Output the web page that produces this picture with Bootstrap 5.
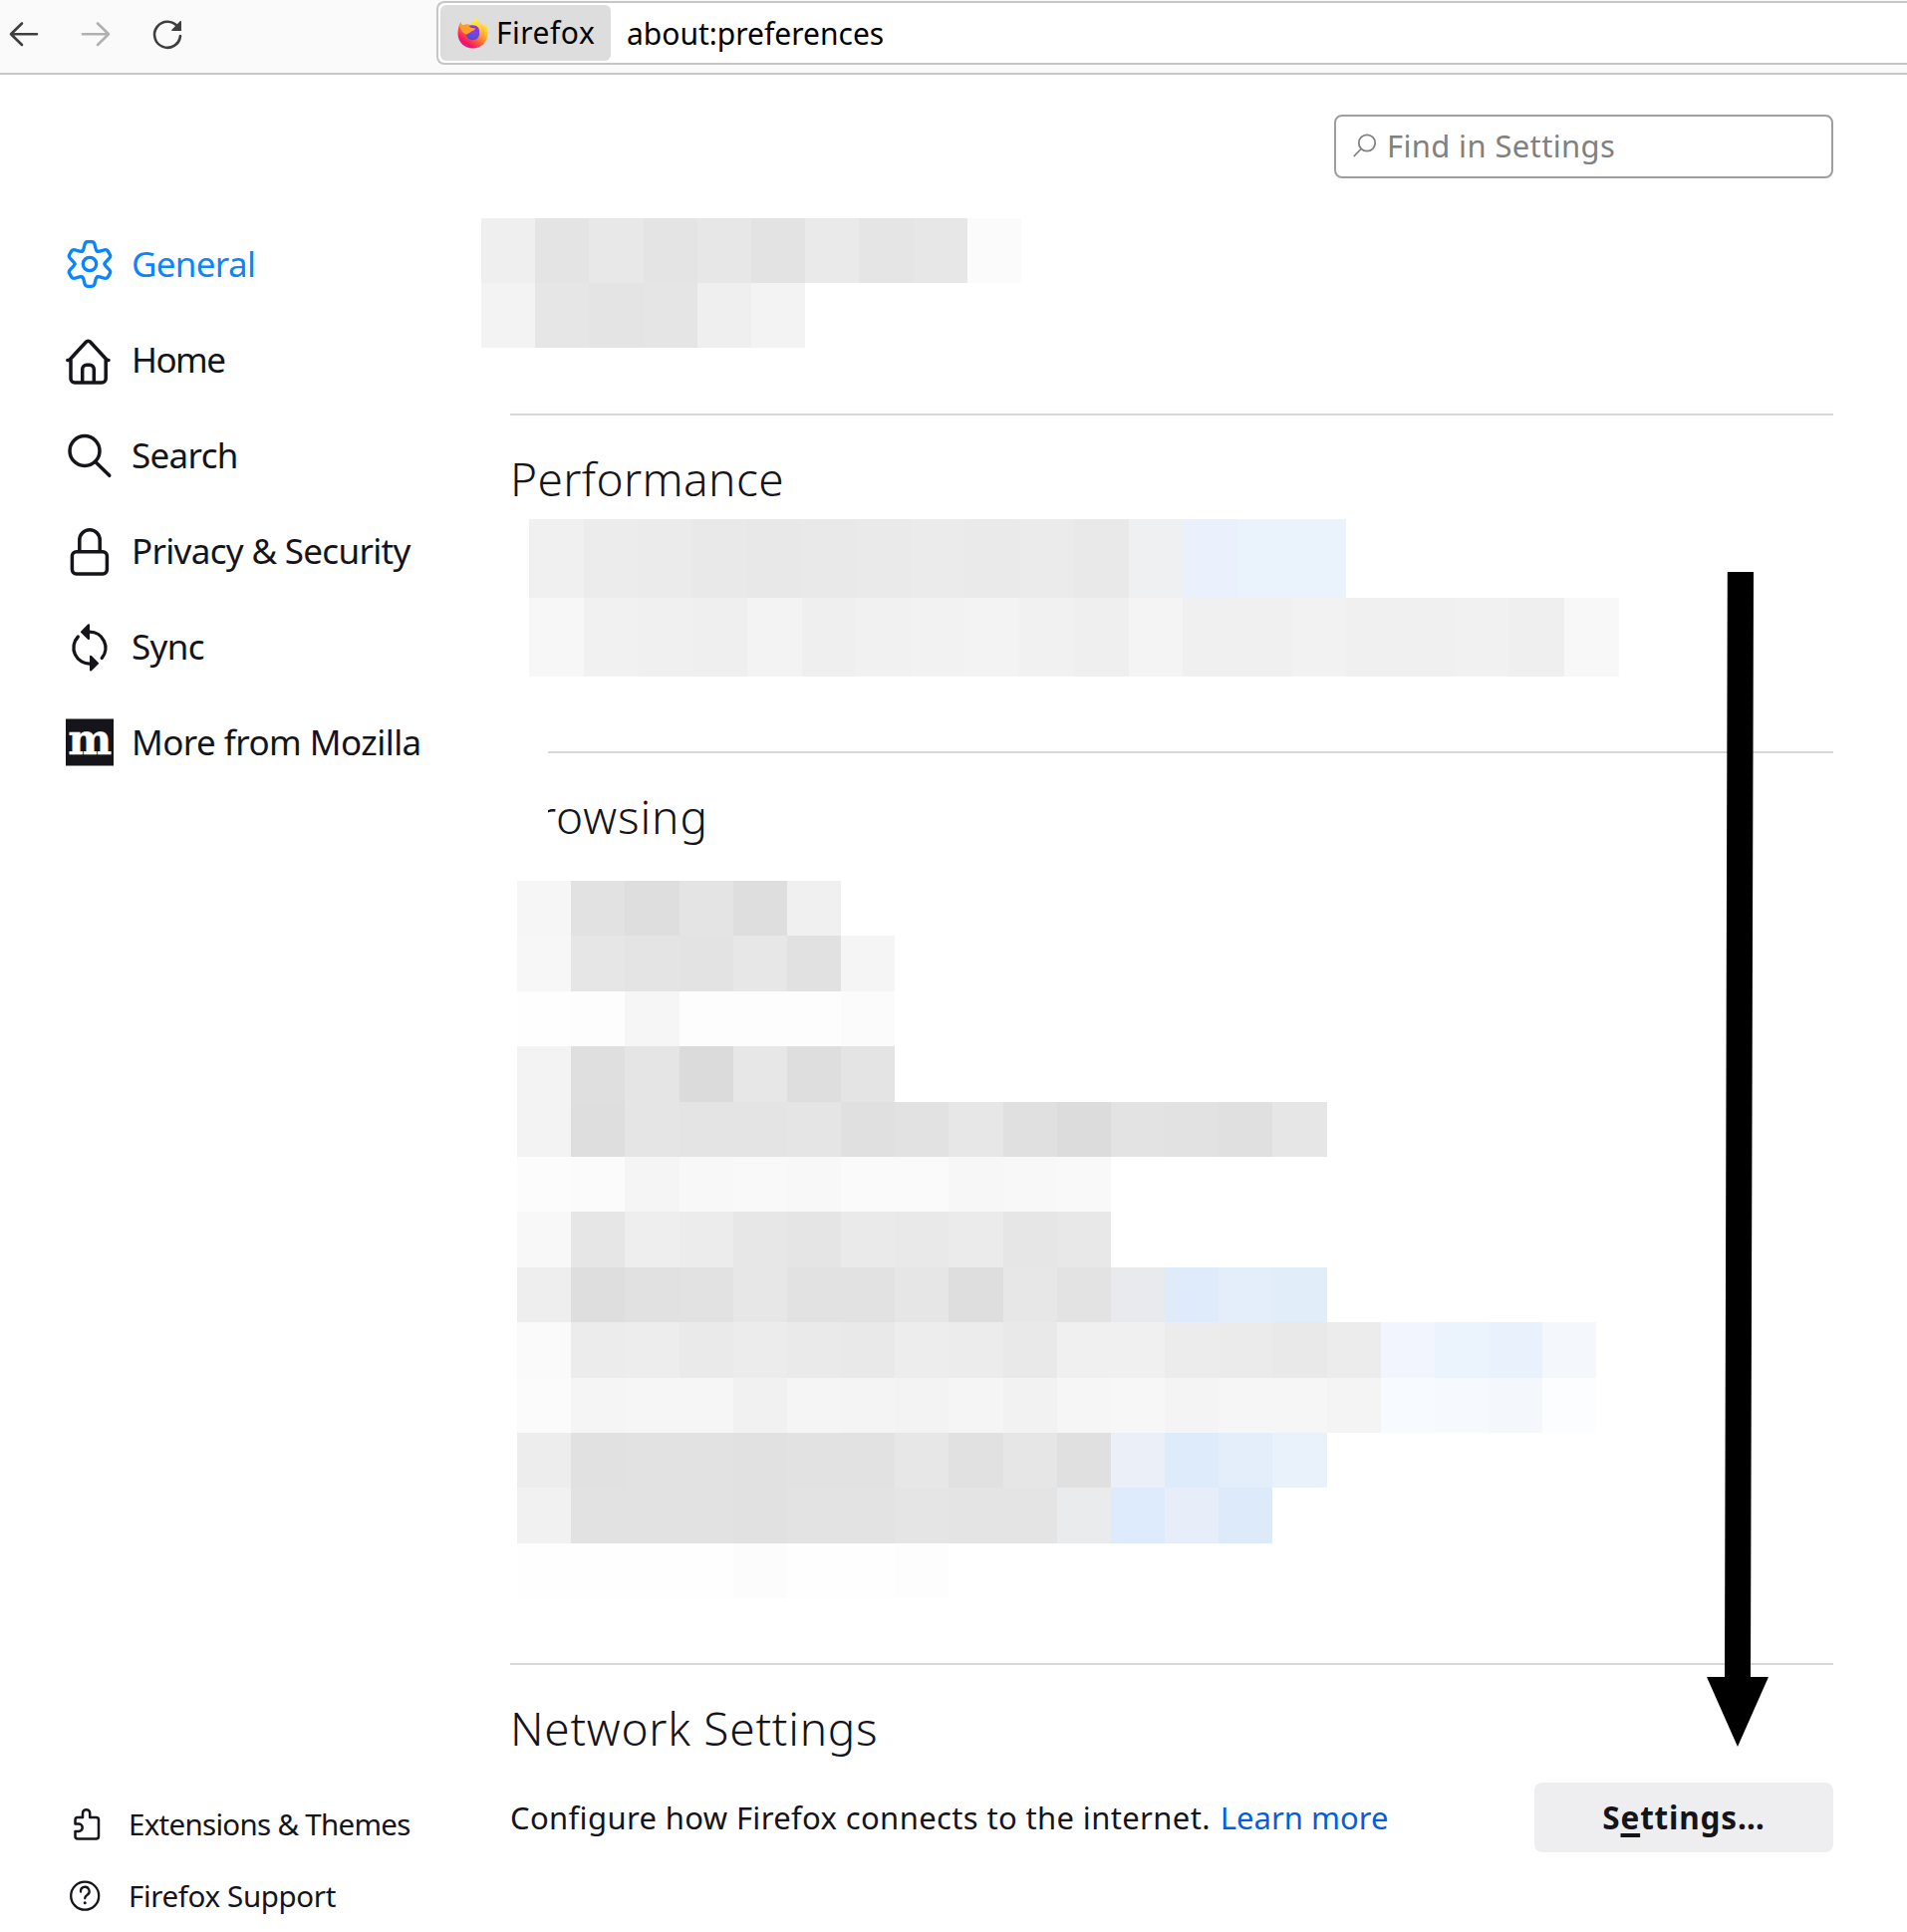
<!DOCTYPE html>
<html lang="en">
<head>
<meta charset="utf-8">
<title>Settings</title>
<link href="https://cdn.jsdelivr.net/npm/bootstrap@5.3.0/dist/css/bootstrap.min.css" rel="stylesheet">
<style>
  html, body { height: 1939px; overflow: hidden; }
  body { font-family: "Noto Sans", sans-serif; color: #15141a; background: #fff; }
  svg { display: block; flex: none; overflow: visible; }
  .toolbar { height: 75px; background: #fafafa; border-bottom: 2px solid #c6c6c6; color: #3e3e3e; }
  .tool-icons { width: 438px; }
  .urlbar { height: 64px; margin-top: 1px; background: #fff; border: 2px solid #c6c6c6; border-right: 0; border-radius: 8px 0 0 8px; padding: 2px; font-size: 30px; line-height: 58px; color: #000; }
  .identity { width: 171px; height: 56px; background: #ddd; border-radius: 6px; padding-left: 17px; }
  .identity span { margin-left: 8px; letter-spacing: .5px; }
  .address { margin-left: 16px; }
  .shell { height: 1864px; }
  .sidebar { width: 512px; padding: 142px 0 0 66px; }
  .side-item { height: 96px; font-size: 35px; line-height: 96px; color: inherit; padding: 0; white-space: nowrap; }
  .side-item span { margin-left: 18px; letter-spacing: -.68px; }
  .side-item .tight { letter-spacing: -1.5px; }
  .side-item .easy { letter-spacing: -.55px; }
  .side-item.active { color: #0a84ff; }
  .side-foot .side-item { height: 72px; font-size: 29.5px; line-height: 72px; }
  .side-foot .side-item span { margin-left: 27px; letter-spacing: -.7px; }
  .side-foot .side-item .loose { letter-spacing: -.35px; }
  .prefs { width: 1328px; padding-top: 40px; }
  .find { width: 501px; height: 64px; border: 2px solid #9e9e9e; border-radius: 8px; color: #808080; font-size: 31px; line-height: 58px; padding: 0 0 2px 17px; background: #fff; }
  .find span { margin-left: 10px; letter-spacing: .35px; }
  .rule { height: 2px; background: #d7d7db; }
  .rule.short { margin-left: 38px; }
  .heading { font-size: 46px; font-weight: 300; line-height: 60px; height: 60px; margin: 33px 0 0; letter-spacing: .4px; white-space: nowrap; }
  .heading.wide { letter-spacing: .75px; }
  .heading.clipped { margin-left: 38px; overflow: hidden; text-indent: -10px; letter-spacing: .9px; }
  .mosaic { display: grid; }
  .m-top { grid-template: repeat(2, 65px) / repeat(10, 54.2px); margin: 40px 0 66px -29px; }
  .m-perf { grid-template: repeat(2, 79px) / repeat(20, 54.68px); margin: 11px 0 75px 19.4px; }
  .m-browse { grid-template: repeat(13, 55.42px) / repeat(20, 54.18px); margin: 35px 0 64.5px 7px; }
  .net-row { margin-top: 25px; font-size: 31px; line-height: 70px; white-space: nowrap; }
  .net-row .desc { letter-spacing: .36px; }
  .net-row a { color: #0060df; margin-left: 10px; letter-spacing: 0; }
  .btn-settings { width: 300px; height: 70px; background: #eeeef0; border-radius: 8px; font-size: 31.5px; font-weight: 700; line-height: 70px; padding: 0; border: 0; letter-spacing: .8px; color: #15141a; }
  .btn-settings u { text-decoration-thickness: 4px; text-underline-offset: 4px; text-decoration-skip-ink: none; }
  .pointer { position: absolute; left: 1713px; top: 574px; }
</style>
<script src="https://cdn.jsdelivr.net/npm/bootstrap@5.3.0/dist/js/bootstrap.bundle.min.js"></script>
</head>
<body class="position-relative">
<header class="toolbar d-flex align-items-start">
  <div class="tool-icons">
    <svg width="200" height="70" fill="none" stroke="currentColor" stroke-width="2.6" stroke-linecap="round" stroke-linejoin="round">
      <path d="M37 34.3H11M22 23.5L11 34.3 22 45"/>
      <path stroke="#b0b0b0" d="M83 34.3h26M98 23.5l11 10.8L98 45"/>
      <path d="M178.5 27A13 13 0 1 0 181 36"/>
      <path fill="currentColor" stroke="none" d="M182 21.6V31h-9c-.8 0-1-.8-.5-1.3l8.200-8.500c.5-.5 1.300-.2 1.300.4z"/>
    </svg>
  </div>
  <div class="urlbar d-flex flex-grow-1">
    <div class="identity d-flex align-items-center">
      <svg width="31" height="32" viewBox="0 0 31 32">
        <defs>
          <linearGradient id="fxBody" x1=".85" y1=".1" x2=".2" y2=".95"><stop offset="0" stop-color="#fff044"/><stop offset=".35" stop-color="#ffb02e"/><stop offset=".62" stop-color="#ff5a36"/><stop offset=".85" stop-color="#f5156c"/><stop offset="1" stop-color="#e31587"/></linearGradient>
          <radialGradient id="fxGlobe" cx=".6" cy=".2" r=".9"><stop offset="0" stop-color="#a238f0"/><stop offset=".6" stop-color="#6548de"/><stop offset="1" stop-color="#4a4bc4"/></radialGradient>
          <linearGradient id="fxHead" x1="0" y1="0" x2="1" y2="1"><stop offset="0" stop-color="#ff9a1f"/><stop offset="1" stop-color="#ffa52e"/></linearGradient>
          <linearGradient id="fxFlame" x1=".3" y1="0" x2=".5" y2="1"><stop offset="0" stop-color="#fff251"/><stop offset=".5" stop-color="#ffcf3a"/><stop offset="1" stop-color="#ff8a2b"/></linearGradient>
        </defs>
        <path fill="url(#fxBody)" d="M3.500 5c0 2 1 3 2.500 3.200C9 6.500 12 7 14 8.500 15 4.500 17.500 3 19.500.8c.5 3.200 3 4.700 5 6.700 1 .2 2 .8 2.500 1.500.5-.8.5-1.600.3-2.400C30 9.500 31 13 30.500 17.500 29.800 26 23.500 31.500 15.500 31.500 7 31.500.5 25 .5 16.500.5 12 1.500 8 3.500 5z"/>
        <circle cx="15.500" cy="16.500" r="6.800" fill="url(#fxGlobe)"/>
        <path fill="url(#fxFlame)" d="M19.500.8c.5 3.200 3 4.700 5 7.200 3.500 4.500 3.800 11-.5 15.500 1-5-.5-9-4-11.500-2.500-1.500-4.500-2.500-6-3.500C15 4.500 17.500 3 19.500.8z"/>
        <path fill="#8a35e6" d="M11.500 9c3-1.500 7-1 9.300 1.500 1.500 1.800 1.700 4 1 6L15 13z"/>
        <path fill="url(#fxHead)" d="M3.500 5c0 2 1 3 2.500 3.200 2-.6 4-.3 5.500.8 1.500 2 4 2.300 6.700 2.500-.5 2-2.500 2.400-4 2.800-1 1.700-3 2-4.500 3.200C7 17 3 14 2.500 8.500z"/>
      </svg>
      <span>Firefox</span>
    </div>
    <div class="address">about:preferences</div>
  </div>
</header>

<div class="shell d-flex">
  <nav class="sidebar nav flex-column flex-nowrap">
    <a class="side-item active d-flex align-items-center text-decoration-none">
      <svg width="48" height="48" viewBox="-24 -24 48 48" fill="none" stroke="currentColor" stroke-width="3.300" stroke-linecap="round">
        <path id="tooth" d="M-7.500-13C-6-13.800-5.900-16-5.400-18.200-4.800-21.500-4-22.300-2.200-22.300H2.200C4-22.300 4.800-21.500 5.400-18.200 5.900-16 6-13.800 7.500-13"/>
        <use href="#tooth" transform="rotate(60)"/><use href="#tooth" transform="rotate(120)"/><use href="#tooth" transform="rotate(180)"/><use href="#tooth" transform="rotate(240)"/><use href="#tooth" transform="rotate(300)"/>
        <circle r="6.700"/>
      </svg>
      <span>General</span></a>
    <a class="side-item d-flex align-items-center text-decoration-none">
      <svg width="48" height="48" fill="none" stroke="currentColor" stroke-width="3.500" stroke-linecap="round" stroke-linejoin="round">
        <path d="M1.800 24.500H3.500L20.300 6.300a3 3 0 0 1 4.400 0L41.500 24.500H43M5 24v19a4 4 0 0 0 4 4H36.200a4 4 0 0 0 4-4V24M16.700 47V33.500a4.300 4.300 0 0 1 4.300-4.300h3a4.300 4.300 0 0 1 4.300 4.300V47"/>
      </svg>
      <span class="tight">Home</span></a>
    <a class="side-item d-flex align-items-center text-decoration-none">
      <svg width="48" height="48" fill="none" stroke="currentColor" stroke-width="3.500" stroke-linecap="round"><circle cx="19" cy="19.500" r="15"/><path d="M30 30.700L43.800 44.300"/></svg>
      <span>Search</span></a>
    <a class="side-item d-flex align-items-center text-decoration-none">
      <svg width="48" height="48" fill="none" stroke="currentColor" stroke-width="3.500"><rect x="6.400" y="24.700" width="35" height="22.200" rx="4.300"/><path d="M13.800 24.700V13A10.200 10.200 0 0 1 34.200 13V24.700"/></svg>
      <span>Privacy &amp; Security</span></a>
    <a class="side-item d-flex align-items-center text-decoration-none">
      <svg width="48" height="48" fill="none" stroke="currentColor" stroke-width="3.300" stroke-linecap="round"><path d="M12.300 14A16 16 0 0 0 25 41M24 9.200A16 16 0 0 1 36.200 35.500"/><path fill="currentColor" stroke-width="1.200" stroke-linejoin="round" d="M15.500 9.200L22.600 2q.8-.6.800.4V15.800q0 1-.8.4zM32.500 40.700L25.400 33.500q-.8-.6-.8.400V47.300q0 1 .8.400z"/></svg>
      <span>Sync</span></a>
    <a class="side-item d-flex align-items-center text-decoration-none">
      <svg width="48" height="48"><rect y=".5" width="48" height="47" fill="#15141a"/><text x="2.500" y="36" font-family="DejaVu Serif, serif" font-weight="700" font-size="43" textLength="43.500" lengthAdjust="spacingAndGlyphs" fill="#fff" stroke="#fff" stroke-width=".7">m</text></svg>
      <span class="easy">More from Mozilla</span></a>

    <div class="side-foot mt-auto">
      <a class="side-item d-flex align-items-center text-decoration-none">
        <svg width="36" height="36" fill="none" stroke="currentColor" stroke-width="2.500" stroke-linejoin="round"><path d="M9.500 17.600V13.500a2.500 2.500 0 0 1 2.500-2.500H17V6.800a3.600 3.600 0 0 1 7.200 0V11H30.500a2.500 2.500 0 0 1 2.500 2.500V30a2.500 2.500 0 0 1-2.500 2.500H12a2.500 2.500 0 0 1-2.500-2.500V25H13a3.700 3.700 0 0 0 0-7.400z"/></svg>
        <span>Extensions &amp; Themes</span></a>
      <a class="side-item d-flex align-items-center text-decoration-none">
        <svg width="36" height="36" fill="none" stroke="currentColor" stroke-width="2.300" stroke-linecap="round"><circle cx="19.200" cy="17.700" r="14"/><path d="M15 13.500a4.300 4.300 0 1 1 6.600 3.200c-1.500 1-2.400 1.700-2.400 3.600"/><circle cx="19.200" cy="24.700" r="1.500" fill="currentColor" stroke="none"/></svg>
        <span class="loose">Firefox Support</span></a>
    </div>
  </nav>

  <main class="prefs">
    <div class="find d-flex align-items-center ms-auto">
      <svg width="24" height="24" fill="none" stroke="currentColor" stroke-width="1.800" stroke-linecap="round"><circle cx="14" cy="9.500" r="8.200"/><path d="M8 15.500L1.300 22.500"/></svg>
      <span>Find in Settings</span>
    </div>

    <div class="mosaic m-top" data-rows="efefef e4e4e4 e8e8e8 e4e4e4 e7e7e7 e3e3e3 eaeaea e5e5e5 e7e7e7 fbfbfb|f3f3f3 e6e6e6 e4e4e4 e5e5e5 efefef f3f3f3"></div>
    <div class="rule"></div>
    <h2 class="heading">Performance</h2>
    <div class="mosaic m-perf" data-rows="f0f0f0 ececec ebebeb e9e9e9 e8e8e8 e9e9e9 eaeaea ebebeb eaeaea ebebeb e9e9e9 eff0f2 eaf1fc eaf2fc eaf2fc|f7f7f7 f1f1f1 f0f0f0 efefef f3f3f3 efefef f1f1f1 f2f2f2 f3f3f3 f1f1f1 efefef f4f4f4 f0f0f0 f0f0f0 f2f2f2 f0f0f0 f0f0f0 f1f1f1 efefef f8f8f8"></div>
    <div class="rule short"></div>
    <h2 class="heading clipped">rowsing</h2>
    <div class="mosaic m-browse" data-rows="f6f6f6 e2e2e2 dedede e4e4e4 dedede f0f0f0|f7f7f7 e6e6e6 e4e4e4 e3e3e3 e7e7e7 e1e1e1 f5f5f5|fefefe fdfdfd f6f6f6 fdfdfd fdfdfd fdfdfd fbfbfb|f3f3f3 dfdfdf e5e5e5 dbdbdb e7e7e7 dedede e4e4e4|f3f3f3 dedede e5e5e5 e4e4e4 e4e4e4 e5e5e5 e0e0e0 e2e2e2 e7e7e7 e0e0e0 dcdcdc e3e3e3 e2e2e2 e0e0e0 e6e6e6|fcfcfc fbfbfb f5f5f5 f8f8f8 f9f9f9 f8f8f8 fafafa fafafa f7f7f7 f8f8f8 f9f9f9|f8f8f8 e6e6e6 eeeeee ececec e7e7e7 e5e5e5 eaeaea e9e9e9 ebebeb e6e6e6 e8e8e8|eeeeee dedede e1e1e1 e2e2e2 e7e7e7 e2e2e2 e2e2e2 e6e6e6 dedede e7e7e7 e3e3e3 e9eaee dfebfa e3eefa e1edf9|fafafa ececec ededed eaeaea ececec eaeaea e9e9e9 ededed ececec e9e9e9 f0f0f0 f0f0f0 ececec ebebeb e9e9e9 ececec f2f5fe ebf3fc e9f1fc f4f8fd|fbfbfb f5f5f5 f6f6f6 f6f6f6 f1f1f1 f5f5f5 f4f4f4 f3f3f3 f5f5f5 f2f2f2 f6f6f6 f7f7f7 f4f4f4 f6f6f6 f6f6f6 f4f4f4 f7fbff f6faff f4f8fd fbfdff|ededed e1e1e1 e2e2e2 e2e2e2 e1e1e1 e2e2e2 e2e2e2 e7e7e7 e1e1e1 e6e6e6 e0e0e0 eaeff8 deebfa e3eefa e9f1fb|f1f1f1 e2e2e2 e2e2e2 e2e2e2 e1e1e1 e3e3e3 e3e3e3 e5e5e5 e4e4e4 e4e4e4 eaebed deebfc e7eefa ddeafa|fefefe fefefe fefefe fefefe fcfcfc fefefe fefefe fdfdfd"></div>
    <div class="rule"></div>
    <h2 class="heading wide">Network Settings</h2>
    <div class="net-row d-flex align-items-center">
      <span class="desc">Configure how Firefox connects to the internet.</span>
      <a class="text-decoration-none">Learn more</a>
      <button class="btn btn-settings ms-auto">S<u>e</u>ttings…</button>
    </div>
  </main>
</div>

<svg class="pointer" width="62" height="1180"><path d="M20.800 0H47L44 1109H62L31 1179 0 1109H18z"/></svg>

<script>
  // Each mosaic lists its cell colours row by row.
  document.querySelectorAll('.mosaic').forEach(box => {
    box.dataset.rows.split('|').forEach((row, r) => row.split(' ').forEach((color, c) => {
      const cell = document.createElement('div');
      cell.style.gridArea = `${r + 1} / ${c + 1}`;
      cell.style.background = '#' + color;
      box.append(cell);
    }));
  });
</script>
</body>
</html>
